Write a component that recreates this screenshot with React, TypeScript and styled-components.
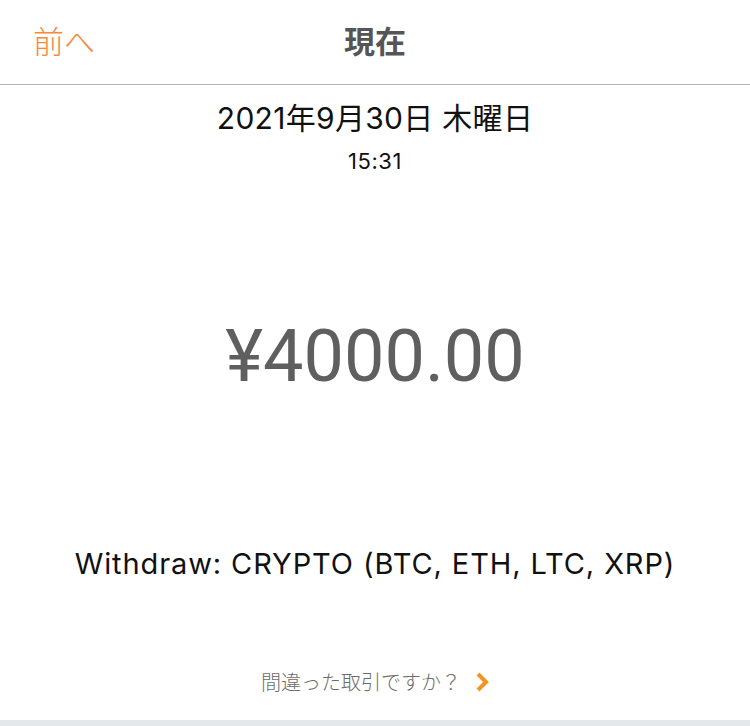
import styled, { createGlobalStyle } from "styled-components";

const GlobalStyle = createGlobalStyle`
  html, body {
    margin: 0;
    padding: 0;
    background: #ffffff;
  }
  body {
    font-family: Inter, "Noto Sans CJK JP", sans-serif;
  }
`;

const Screen = styled.div`
  width: 750px;
  height: 726px;
  display: flex;
  flex-direction: column;
  overflow: hidden;
`;

const NavBar = styled.header`
  height: 84px;
  display: grid;
  grid-template-columns: 1fr auto 1fr;
  align-items: center;
  border-bottom: 1px solid #b3b3b3;
  padding: 0 33px;
`;

const BackLink = styled.a`
  justify-self: start;
  color: #f58a3c;
  font-size: 31px;
  font-family: "Noto Sans CJK JP", sans-serif;
  font-weight: 300;
  text-decoration: none;
  margin-top: -6px;
`;

const NavTitle = styled.h1`
  margin: -6px 0 0;
  font-size: 31px;
  font-weight: 700;
  color: #555555;
  font-family: "Noto Sans CJK JP", sans-serif;
`;

const Body = styled.main`
  flex: 1;
  display: flex;
  flex-direction: column;
  align-items: center;
`;

const DateLine = styled.div`
  margin-top: 16px;
  font-size: 30px;
  line-height: 34px;
  letter-spacing: 0.3px;
  color: #111111;
`;

const TimeLine = styled.div`
  margin-top: 14px;
  font-size: 22px;
  line-height: 24px;
  letter-spacing: 0.6px;
  color: #111111;
`;

const Amount = styled.div`
  margin-top: 141px;
  font-family: Roboto, sans-serif;
  font-size: 72px;
  line-height: 86px;
  color: #5f5f5f;
`;

const Method = styled.div`
  margin-top: 147px;
  font-size: 29px;
  line-height: 34px;
  letter-spacing: 0.9px;
  color: #111111;
`;

const HelpLink = styled.a`
  margin-top: 89px;
  display: flex;
  align-items: center;
  gap: 14px;
  font-size: 20px;
  line-height: 24px;
  color: #6b6b6b;
  text-decoration: none;
  font-family: "Noto Sans CJK JP", sans-serif;
  font-weight: 300;
`;

const BottomStrip = styled.div`
  height: 6px;
  background: #e4e8ea;
`;

const Chevron = () => (
  <svg width="14" height="20" viewBox="0 0 14 20">
    <path
      d="M3 2 L11 10 L3 18"
      fill="none"
      stroke="#f7931e"
      strokeWidth="4"
      strokeLinejoin="miter"
    />
  </svg>
);

export default function App() {
  return (
    <>
      <GlobalStyle />
      <Screen>
        <NavBar>
          <BackLink href="#">前へ</BackLink>
          <NavTitle>現在</NavTitle>
          <span />
        </NavBar>
        <Body>
          <DateLine>2021年9月30日 木曜日</DateLine>
          <TimeLine>15:31</TimeLine>
          <Amount>¥4000.00</Amount>
          <Method>Withdraw: CRYPTO (BTC, ETH, LTC, XRP)</Method>
          <HelpLink href="#">
            間違った取引ですか？
            <Chevron />
          </HelpLink>
        </Body>
        <BottomStrip />
      </Screen>
    </>
  );
}
